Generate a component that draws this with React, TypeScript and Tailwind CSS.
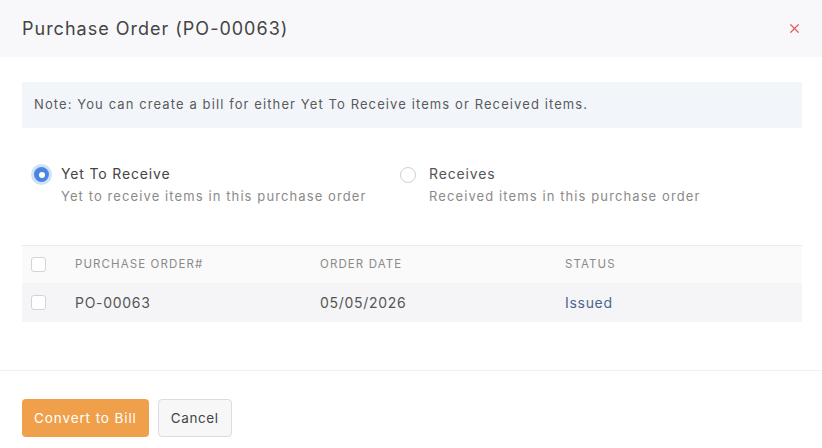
import { X } from "lucide-react";

const rows = [{ po: "PO-00063", date: "05/05/2026", status: "Issued" }];

export default function App() {
  return (
    <div className="h-[448px] w-[822px] overflow-hidden bg-white text-[#333] [font-family:Inter,'Liberation_Sans',sans-serif]">
      <div className="flex h-[57px] items-center justify-between bg-[#f8f8fa] pl-[22px] pr-[20px]">
        <h1 className="text-[18px] font-normal tracking-[1px] text-[#444]">Purchase Order (PO-00063)</h1>
        <X className="h-[15px] w-[15px] text-[#e0605f]" strokeWidth={2} />
      </div>

      <div className="pl-[22px] pr-[20px] pt-[25px]">
        <div className="flex h-[46px] items-center rounded-[2px] bg-[#f2f6fa] px-[12px] text-[13px] tracking-[1.1px] text-[#5a5a5a]">
          Note: You can create a bill for either Yet To Receive items or Received items.
        </div>

        <div className="mt-[36px] flex pl-[12px]">
          <label className="flex w-[366px] gap-[12px]">
            <span className="mt-[3px] flex h-[15px] w-[15px] items-center justify-center rounded-full bg-[#4a86e0] shadow-[0_0_0_3px_rgba(74,134,224,0.25)]">
              <span className="h-[6px] w-[6px] rounded-full bg-white" />
            </span>
            <span className="flex flex-col">
              <span className="text-[14px] leading-[20px] tracking-[0.85px] text-[#444]">Yet To Receive</span>
              <span className="mt-[3px] text-[13px] leading-[18px] tracking-[1.1px] text-[#8a8a8a]">
                Yet to receive items in this purchase order
              </span>
            </span>
          </label>
          <label className="flex gap-[13px]">
            <span className="mt-[3px] h-[16px] w-[16px] rounded-full border border-[#cfcfd4] bg-white" />
            <span className="flex flex-col">
              <span className="text-[14px] leading-[20px] tracking-[0.85px] text-[#555]">Receives</span>
              <span className="mt-[3px] text-[13px] leading-[18px] tracking-[1.1px] text-[#8a8a8a]">
                Received items in this purchase order
              </span>
            </span>
          </label>
        </div>

        <div className="mt-[40px] border-t border-[#ececf0]">
          <div className="grid h-[37px] grid-cols-[53px_245px_245px_1fr] items-center bg-[#fafafb] text-[11.5px] uppercase tracking-[1.1px] text-[#8a8a8a]">
            <span className="pl-[9px]">
              <span className="block h-[15px] w-[15px] rounded-[3px] border border-[#d4d4d8] bg-white" />
            </span>
            <span>Purchase Order#</span>
            <span>Order Date</span>
            <span>Status</span>
          </div>
          {rows.map((r) => (
            <div
              key={r.po}
              className="grid h-[39px] grid-cols-[53px_245px_245px_1fr] items-center bg-[#f5f5f7] text-[14px] tracking-[0.7px] text-[#555]"
            >
              <span className="pl-[9px]">
                <span className="block h-[15px] w-[15px] rounded-[3px] border border-[#d4d4d8] bg-white" />
              </span>
              <span>{r.po}</span>
              <span>{r.date}</span>
              <span className="text-[#4a6590]">{r.status}</span>
            </div>
          ))}
        </div>
      </div>

      <div className="mt-[48px] border-t border-[#f0f0f2] px-[22px] pt-[28px]">
        <div className="flex gap-[9px]">
          <button className="h-[38px] rounded-[4px] bg-[#f0a04b] px-[12px] text-[13.5px] tracking-[0.9px] text-white">
            Convert to Bill
          </button>
          <button className="h-[38px] rounded-[4px] border border-[#dcdce0] bg-[#f7f7f8] px-[12px] text-[13.5px] tracking-[0.6px] text-[#444]">
            Cancel
          </button>
        </div>
      </div>
    </div>
  );
}
